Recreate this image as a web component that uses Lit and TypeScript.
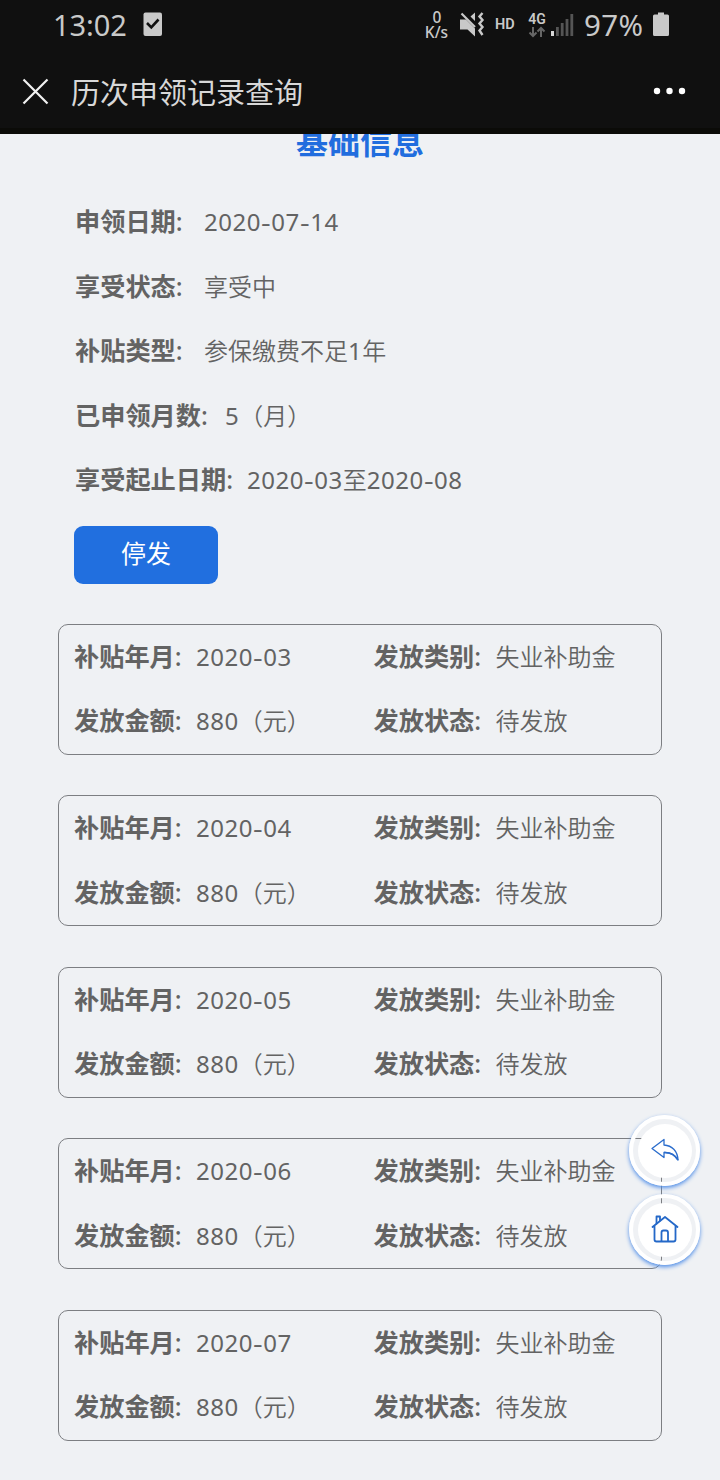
import { LitElement, html, css, svg } from "lit";
import { customElement, property } from "lit/decorators.js";

/** Splits a value so that digits, hyphens and CJK characters get their own metrics. */
const runs = (text: string) =>
  (text.match(/[0-9]+|-|[^0-9-]+/g) ?? []).map((run) =>
    run === "-"
      ? html`<span class="num hyphen">-</span>`
      : /[0-9]/.test(run)
        ? html`<span class="num">${run}</span>`
        : html`<span class="cjk">${run}</span>`
  );

const fieldStyles = css`
  .label {
    font-size: 25.2px;
    font-weight: 700;
    white-space: nowrap;
    flex: none;
  }
  .colon {
    font-weight: 500;
    font-family: "Noto Sans", sans-serif;
  }
  .value {
    font-size: 24px;
    white-space: nowrap;
    display: flex;
    align-items: baseline;
  }
  .num {
    font-family: "Noto Sans", "Open Sans", sans-serif;
    letter-spacing: 0.5px;
  }
  .hyphen {
    width: 10.4px;
    transform: scaleX(1.25);
    transform-origin: left;
  }
  .cjk {
    font-weight: 350;
  }
`;

@customElement("status-bar")
class StatusBar extends LitElement {
  static styles = css`
    :host {
      display: flex;
      height: 50px;
      align-items: center;
      color: #c9c9c9;
      padding: 0 50px 0 53px;
      font-family: "Noto Sans", sans-serif;
      box-sizing: border-box;
    }
    .time { font-size: 29px; line-height: 48px; width: 90px; letter-spacing: -0.1px; }
    .spacer { flex: 1; }
    .speed { display: grid; grid-template-rows: 15px 15px; font-size: 15.5px; line-height: 15px; text-align: center; font-weight: 500; width: 27px; margin: 0 10px 1px 0; white-space: nowrap; }
    .speed span:first-child { padding-left: 1px; }
    .hd { font: 600 14.5px "Roboto", sans-serif; margin: 0 11px 2px 10px; width: 21px; }
    .net { display: flex; flex-direction: column; align-items: center; width: 20px; font: 600 14px/14px "Roboto", sans-serif; margin-right: 4px; }
    .pct { font-size: 29.5px; line-height: 48px; width: 61px; margin-left: 10px; letter-spacing: 0.4px; white-space: nowrap; }
    svg { display: block; flex: none; }
    .battery { margin-left: 7px; }
  `;
  render() {
    return html`
      <span class="time">13:02</span>
      <svg width="20" height="26" viewBox="0 0 20 26">
        <rect x="0.5" y="0.5" width="18.5" height="23.5" rx="2" fill="#c9c9c9" />
        <path d="M4 11 8.3 15.3 15.5 7.5" fill="none" stroke="#101010" stroke-width="2.6" />
      </svg>
      <span class="spacer"></span>
      <div class="speed"><span>0</span><span>K/s</span></div>
      <svg width="25" height="26" viewBox="0 0 25 26">
        <path d="M0 7.500H6L15 16.500V24.500L7.500 17.500H0zM10.500 4.500 15 .5V9z" fill="#c9c9c9" />
        <path d="M1.500 1.500 15 15" stroke="#c9c9c9" stroke-width="2.200" />
        <path d="M22.500 1 19.500 4.500l3 3.500-3 3.500 3 3.500-3 3.500 3 4.500" fill="none" stroke="#c9c9c9" stroke-width="2.400" />
      </svg>
      <span class="hd">HD</span>
      <div class="net">
        <span>4G</span>
        <svg width="18" height="12" viewBox="0 0 18 12">
          <path d="M5 1v9M1.500 6.500 5 10l3.500-3.500M13 11V2M9.500 5.500 13 2l3.500 3.500" fill="none" stroke="#666" stroke-width="2" />
        </svg>
      </div>
      <svg width="23" height="24" viewBox="0 0 23 24">
        <rect x="0" y="18" width="3" height="5" fill="#d8d8d8" />
        ${[14, 10, 6, 1].map((y, i) => svg`<rect x=${5 + i * 4.8} y=${y} width="2.8" height=${23 - y} fill="#555"/>`)}
      </svg>
      <span class="pct">97%</span>
      <svg class="battery" width="18" height="26" viewBox="0 0 18 26">
        <path d="M6 .5h6v2h3.500q1.500 0 1.500 1.500v18.500q0 1.500-1.500 1.500H2.500Q1 24 1 22.500V4Q1 2.500 2.500 2.500H6z" fill="#c9c9c9" />
      </svg>
    `;
  }
}

@customElement("title-bar")
class TitleBar extends LitElement {
  static styles = css`
    :host {
      display: flex;
      height: 84px;
      align-items: center;
      padding: 0 33px 0 22px;
      box-sizing: border-box;
      border-bottom: 6px solid #0b0b08;
      color: #d8d8d8;
      font-family: "Noto Sans CJK SC", sans-serif;
    }
    .title { flex: 1; margin-left: 22px; font-size: 29px; line-height: 42px; padding-top: 3px; }
    svg { display: block; margin-top: 4px; }
  `;
  render() {
    return html`
      <svg width="27" height="27" viewBox="0 0 27 27">
        <path d="M1.500 1.500 25.500 25.500M25.500 1.500 1.500 25.500" stroke="#f2f2f2" stroke-width="2.200" />
      </svg>
      <span class="title">历次申领记录查询</span>
      <svg width="34" height="8" viewBox="0 0 34 8" fill="#fff">
        <circle cx="4" cy="4" r="3.200" /><circle cx="16.500" cy="4" r="3.200" /><circle cx="29" cy="4" r="3.200" />
      </svg>
    `;
  }
}

@customElement("record-card")
class RecordCard extends LitElement {
  @property() month = "";
  static styles = [
    fieldStyles,
    css`
      :host {
        display: grid;
        grid-template-columns: 299.5px 1fr;
        grid-template-rows: 64.4px 64.4px;
        height: 131px;
        box-sizing: border-box;
        border: 1px solid #7c7e82;
        border-radius: 10px;
        padding-left: 15px;
      }
      .field { display: flex; align-items: baseline; line-height: 61px; }
      .label { width: 122px; }
    `,
  ];
  render() {
    const fields = [
      ["补贴年月", this.month],
      ["发放类别", "失业补助金"],
      ["发放金额", "880（元）"],
      ["发放状态", "待发放"],
    ];
    return fields.map(
      ([label, value]) => html`<div class="field">
        <span class="label">${label}<span class="colon">:</span></span>
        <span class="value">${runs(value)}</span>
      </div>`
    );
  }
}

@customElement("app-root")
class AppRoot extends LitElement {
  static styles = [
    fieldStyles,
    css`
      :host {
        display: block;
        position: relative;
        width: 720px;
        height: 1480px;
        overflow: hidden;
        background: #eff1f4;
        color: #636363;
        font-family: "Noto Sans CJK SC", sans-serif;
      }
      header { background: #101010; }
      .heading {
        height: 56px;
        overflow: hidden;
        display: flex;
        justify-content: center;
        align-items: flex-start;
      }
      h1 { margin: -17px 0 0; font-size: 32px; line-height: 46px; color: #216dde; }
      .info { padding-left: 75px; }
      .row { display: flex; align-items: baseline; height: 64.5px; line-height: 60px; }
      button {
        display: block;
        width: 144px;
        height: 58px;
        margin: 13.5px 0 0 74px;
        padding: 0 0 6px;
        border: 0;
        border-radius: 9px;
        background: #216fdf;
        color: #fff;
        font: 25px "Noto Sans CJK SC", sans-serif;
      }
      .cards { display: grid; row-gap: 40.4px; padding: 40px 58px 0; }
      .float {
        position: absolute;
        right: 20px;
        top: 1115px;
        display: grid;
        row-gap: 8px;
      }
      .round {
        width: 71px;
        height: 71px;
        box-sizing: border-box;
        border: 4px solid #fff;
        border-radius: 50%;
        box-shadow: 0 2px 4px #4b8be8;
        display: grid;
        place-items: center;
      }
      .disc {
        width: 54px;
        height: 54px;
        border-radius: 50%;
        background: #fff;
        display: grid;
        place-items: center;
      }
      .disc svg { display: block; margin-bottom: 2px; }
    `,
  ];
  render() {
    const info: [string, string, number][] = [
      ["申领日期", "2020-07-14", 129],
      ["享受状态", "享受中", 129],
      ["补贴类型", "参保缴费不足1年", 129],
      ["已申领月数", "5（月）", 150],
      ["享受起止日期", "2020-03至2020-08", 172],
    ];
    return html`
      <header><status-bar></status-bar><title-bar></title-bar></header>
      <div class="heading"><h1>基础信息</h1></div>
      <div class="info">
        ${info.map(
          ([label, value, width]) => html`<div class="row">
            <span class="label" style="width:${width}px">${label}<span class="colon">:</span></span>
            <span class="value">${runs(value)}</span>
          </div>`
        )}
      </div>
      <button>停发</button>
      <div class="cards">
        ${["03", "04", "05", "06", "07"].map((m) => html`<record-card month="2020-${m}"></record-card>`)}
      </div>
      <div class="float">
        <div class="round"><div class="disc">
          <svg width="30" height="26" viewBox="0 0 30 26" fill="none" stroke="#2a6ccc" stroke-width="1.300" stroke-linejoin="round">
            <path d="M2 11.500 14 2.500V8C22 8.500 27.500 14 28 23 24.500 17.500 20 15.300 14 15.500V20.500z" />
            <path d="M14 15.500C21 15 25 17.500 28 23" stroke-width="1.600" />
          </svg>
        </div></div>
        <div class="round"><div class="disc">
          <svg width="28" height="30" viewBox="0 0 28 30" fill="none" stroke="#2468c8" stroke-width="1.800" stroke-linejoin="round" stroke-linecap="round">
            <path d="M1.500 13 14 3 26.500 13M3.500 12V25.500Q3.500 27.500 5.500 27.500H22.500Q24.500 27.500 24.500 25.500V12" />
            <path d="M5.500 9.500V2.500H9V6.500M10.500 27V18.500Q10.500 16.500 12.500 16.500H15Q17 16.500 17 18.500V27" />
          </svg>
        </div></div>
      </div>
    `;
  }
}
